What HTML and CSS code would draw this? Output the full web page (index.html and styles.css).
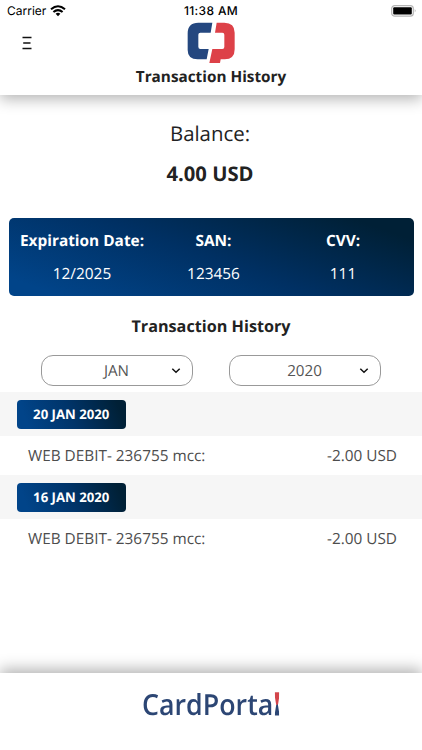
FILE: index.html
```html
<!DOCTYPE html>
<html lang="en">
<head>
<meta charset="utf-8">
<title>Transaction History</title>
<link rel="stylesheet" href="styles.css">
</head>
<body>
<div class="app">
  <header class="header">
    <div class="status">
      <div class="carrier"><span class="carrier-name">Carrier</span>
        <svg class="wifi" width="16" height="12" viewBox="0 0 16 12"><g fill="none" stroke="#000" stroke-width="2.1"><path d="M1 4.3Q8-1.8 15 4.3"/><path d="M3.4 7Q8 3.1 12.6 7"/></g><path d="M5.6 8.7Q8 6.9 10.4 8.7L8 11.2Z"/></svg>
      </div>
      <div class="time">11:38 AM</div>
      <svg class="battery" width="26" height="12" viewBox="0 0 26 12"><rect x=".7" y=".6" width="21.6" height="10.6" rx="3" fill="#fff" stroke="#b5b5b5" stroke-width="1.2"/><rect x="2.2" y="2.2" width="18.6" height="7.4" rx="1"/><path d="M23.8 4Q25.4 5.8 23.8 7.6Z" fill="#999"/></svg>
    </div>
    <div class="brand-row">
      <svg class="menu" width="10" height="14" viewBox="0 0 10 14"><path d="M.5 1.5H9.5M1.2 7H8.5M.5 12.5H9.5" stroke="#111" stroke-width="1.3"/></svg>
      <svg class="logo" width="48" height="42" viewBox="170 66 144 126"><path fill="#24477f" d="M246 68L241 98H210Q204 98 204 104V140Q204 147 210 147H235L229 178H202Q172 178 172 150V100Q172 68 204 68Z"/><path fill="#dd4148" d="M259 68H282Q313 68 313 98V148Q313 178 283 178H271L269 189H237L246 147H276Q282 147 282 141V104Q282 98 276 98H254Z"/></svg>
    </div>
    <h1 class="title">Transaction History</h1>
  </header>
  <main class="main">
    <section class="balance">
      <div class="balance-label">Balance:</div>
      <div class="balance-value">4.00 USD</div>
    </section>
    <section class="card">
      <div class="cell"><b>Expiration Date:</b><span>12/2025</span></div>
      <div class="cell"><b>SAN:</b><span>123456</span></div>
      <div class="cell"><b>CVV:</b><span>111</span></div>
    </section>
    <h2 class="subtitle">Transaction History</h2>
    <div class="filters">
      <div class="select"><span>JAN</span><svg class="chevron" width="10" height="8" viewBox="0 0 10 8"><path d="M1.3 1.8L5 5.3L8.7 1.8"/></svg></div>
      <div class="select"><span>2020</span><svg class="chevron" width="10" height="8" viewBox="0 0 10 8"><path d="M1.3 1.8L5 5.3L8.7 1.8"/></svg></div>
    </div>
    <div class="day"><span class="date">20 JAN 2020</span></div>
    <div class="entry"><span class="desc">WEB DEBIT- 236755 mcc:</span><span class="amount">-2.00 USD</span></div>
    <div class="day"><span class="date">16 JAN 2020</span></div>
    <div class="entry"><span class="desc">WEB DEBIT- 236755 mcc:</span><span class="amount">-2.00 USD</span></div>
  </main>
  <footer class="footer"><div class="wordmark">CardPorta<span class="ell">l</span></div></footer>
</div>
</body>
</html>
```
FILE: styles.css
```css
* { box-sizing: border-box; }
body { margin: 0; background: #fff; font-family: "Open Sans", sans-serif; color: #222; text-rendering: geometricPrecision; }
.app { width: 422px; height: 750px; display: flex; flex-direction: column; overflow: hidden; }
.header { height: 95px; flex: none; background: #fff; box-shadow: 0 4px 14px rgba(0,0,0,.3); }
.status { height: 21px; padding: 0 7px; display: grid; grid-template-columns: 1fr auto 1fr; align-items: center; font-family: Inter, sans-serif; color: #000; }
.carrier { display: flex; align-items: center; gap: 4px; font-size: 12px; }
.time { font-size: 12px; font-weight: 500; letter-spacing: .35px; }
.battery { justify-self: end; margin-right: -2px; }
.brand-row { height: 42px; display: grid; grid-template-columns: 1fr 48px 1fr; align-items: start; }
.menu { margin: 15px 0 0 21.5px; }
.logo { margin-top: 1px; }
.title { margin: 3px 0 0; font-size: 15.3px; line-height: 22px; text-align: center; font-weight: 700; }
.main { flex: 1; }
.balance { padding: 23px 2px 0 0; height: 123px; text-align: center; }
.balance-label { font-size: 20.4px; line-height: 30px; }
.balance-value { margin-top: 10px; font-size: 20.2px; line-height: 30px; font-weight: 700; }
.card { margin: 0 8.5px; height: 78px; border-radius: 5px; padding: 12px 0 0 12px; display: grid; grid-template-columns: 123px 140px 119px; color: #fff; background: linear-gradient(20deg, #014489 8%, #003063 50%, #002036 90%); font-size: 15.4px; }
.cell { display: flex; flex-direction: column; align-items: center; gap: 11px; line-height: 22px; white-space: nowrap; }
.subtitle { margin: 18px 0 0; font-size: 16.2px; line-height: 24px; text-align: center; font-weight: 700; }
.filters { margin-top: 17px; padding: 0 41px; display: flex; justify-content: space-between; }
.select { width: 152px; height: 31px; border: 1px solid #999; border-radius: 12px; display: grid; grid-template-columns: 1fr 10px; align-items: center; padding: 0 11px 0 20px; font-size: 15.2px; color: #555; text-align: center; }
.chevron { fill: none; stroke: #111; stroke-width: 1.5; }
.day { height: 44px; padding: 8px 16.5px; background: #f6f6f6; }
.filters + .day { margin-top: 6px; }
.date { display: block; width: 109.5px; height: 29px; border-radius: 4px; color: #fff; font-size: 13.2px; line-height: 29px; font-weight: 700; text-align: center; background: linear-gradient(70deg, #014489 10%, #003469 50%, #002036 92%); }
.entry { height: 39px; padding: 0 25px 0 28px; display: flex; align-items: center; justify-content: space-between; font-size: 15.35px; color: #4d4d4d; }
.footer { height: 77px; flex: none; background: #fff; box-shadow: 0 -4px 14px rgba(0,0,0,.3); padding: 14px 0 0 142px; }
.wordmark { width: 160px; font-size: 29px; font-weight: 650; line-height: 36px; color: #2c4674; white-space: nowrap; transform: scaleX(.924); transform-origin: left; }
.ell { display: inline-block; color: transparent; background: linear-gradient(160deg, #d3454b 48%, #2c4674 51%); background-clip: text; -webkit-background-clip: text; clip-path: polygon(0 0, 100% 0, 62% 50%, 100% 100%, 0 100%, 38% 50%); -webkit-text-stroke: 1.2px transparent; }
```
